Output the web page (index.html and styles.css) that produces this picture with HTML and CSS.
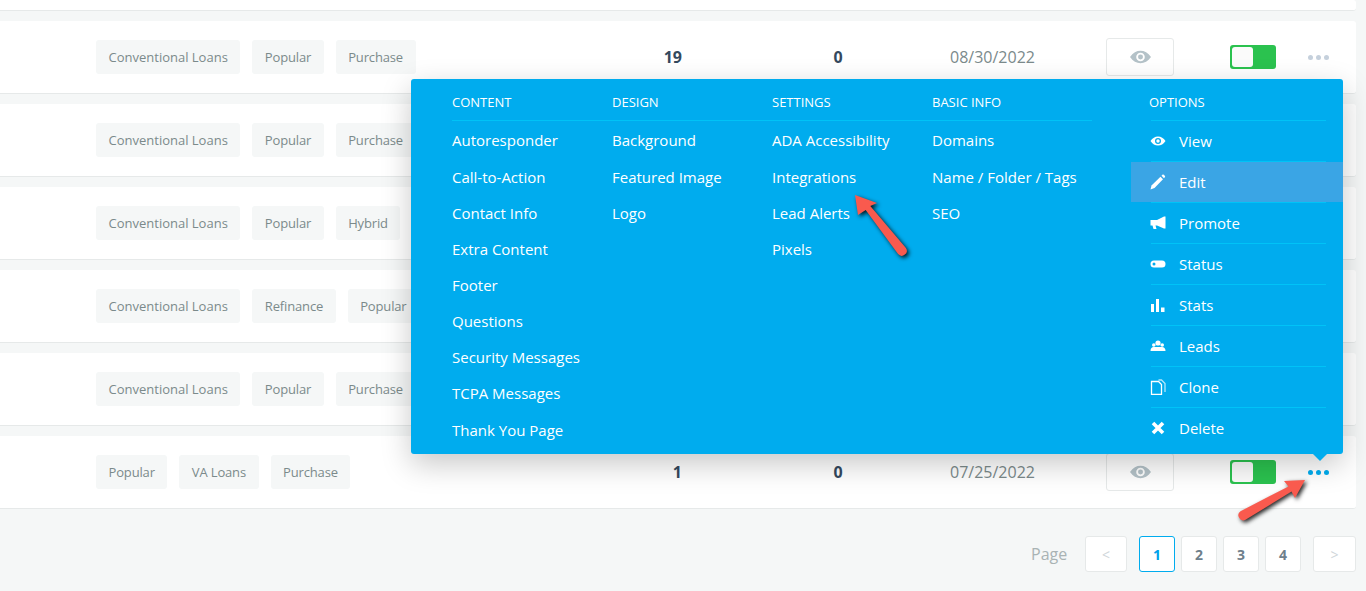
FILE: index.html
```html
<!DOCTYPE html>
<html lang="en">
<head>
<meta charset="utf-8">
<title>Funnels</title>
<link rel="stylesheet" href="styles.css">
</head>
<body>
<main class="page">
  <div class="row row-cut"></div>

  <div class="row">
    <div class="tags"><span class="tag">Conventional Loans</span><span class="tag tight">Popular</span><span class="tag tight">Purchase</span></div>
    <div class="num num-r">19</div><div class="num">0</div><div class="date">08/30/2022</div>
    <button class="eye-btn"><svg class="eye" viewBox="0 0 22 14"><path fill-rule="evenodd" d="M0 7C3 2.500 7 .5 11 .5S19 2.500 22 7c-3 4.500-7 6.500-11 6.500S3 11.500 0 7Zm11-4.500a4.500 4.500 0 1 0 0 9 4.500 4.500 0 0 0 0-9Z"/><circle cx="11" cy="7" r="2.600"/></svg></button>
    <div class="toggle"><span class="knob"></span></div>
    <div class="dots"><i></i><i></i><i></i></div>
  </div>

  <div class="row">
    <div class="tags"><span class="tag">Conventional Loans</span><span class="tag tight">Popular</span><span class="tag tight">Purchase</span></div>
  </div>
  <div class="row">
    <div class="tags"><span class="tag">Conventional Loans</span><span class="tag tight">Popular</span><span class="tag tight">Hybrid</span></div>
  </div>
  <div class="row">
    <div class="tags"><span class="tag">Conventional Loans</span><span class="tag tight">Refinance</span><span class="tag tight">Popular</span></div>
  </div>
  <div class="row">
    <div class="tags"><span class="tag">Conventional Loans</span><span class="tag tight">Popular</span><span class="tag tight">Purchase</span></div>
  </div>

  <div class="row">
    <div class="tags"><span class="tag tight">Popular</span><span class="tag tight">VA Loans</span><span class="tag tight">Purchase</span></div>
    <div class="num num-r">1</div><div class="num">0</div><div class="date">07/25/2022</div>
    <button class="eye-btn"><svg class="eye" viewBox="0 0 22 14"><path fill-rule="evenodd" d="M0 7C3 2.500 7 .5 11 .5S19 2.500 22 7c-3 4.500-7 6.500-11 6.500S3 11.500 0 7Zm11-4.500a4.500 4.500 0 1 0 0 9 4.500 4.500 0 0 0 0-9Z"/><circle cx="11" cy="7" r="2.600"/></svg></button>
    <div class="toggle"><span class="knob"></span></div>
    <div class="dots active"><i></i><i></i><i></i></div>
  </div>

  <nav class="pager">
    <span class="pager-label">Page</span>
    <a class="pg pg-edge">&lt;</a>
    <a class="pg current">1</a>
    <a class="pg">2</a>
    <a class="pg">3</a>
    <a class="pg">4</a>
    <a class="pg pg-edge pg-next">&gt;</a>
  </nav>
</main>

<section class="menu">
  <div class="cols">
    <div class="col">
      <h4>Content</h4>
      <a>Autoresponder</a><a>Call-to-Action</a><a>Contact Info</a><a>Extra Content</a><a>Footer</a><a>Questions</a><a>Security Messages</a><a>TCPA Messages</a><a>Thank You Page</a>
    </div>
    <div class="col">
      <h4>Design</h4>
      <a>Background</a><a>Featured Image</a><a>Logo</a>
    </div>
    <div class="col">
      <h4>Settings</h4>
      <a>ADA Accessibility</a><a>Integrations</a><a>Lead Alerts</a><a>Pixels</a>
    </div>
    <div class="col">
      <h4>Basic Info</h4>
      <a>Domains</a><a>Name / Folder / Tags</a><a>SEO</a>
    </div>
  </div>
  <div class="options">
    <h4>Options</h4>
    <a class="opt"><span class="opt-in"><svg class="ico" viewBox="0 0 16 16"><path fill-rule="evenodd" d="M.5 8C2.500 5 5 3.500 8 3.500S13.500 5 15.500 8c-2 3-4.500 4.500-7.500 4.500S2.500 11 .5 8ZM8 5a3 3 0 1 0 0 6 3 3 0 0 0 0-6Z"/><circle cx="8" cy="8" r="1.700"/></svg>View</span></a>
    <a class="opt hover"><span class="opt-in"><svg class="ico" viewBox="0 0 16 16"><path d="M.5 15.500 1.500 11.500 10.500 2.800l2.500 2.500L4.500 14Z"/><path d="M11.500 1.800 12.700.6q.6-.4 1.100.1L15 1.900q.3.500 0 1L14 4.300Z"/></svg>Edit</span></a>
    <a class="opt"><span class="opt-in"><svg class="ico" viewBox="0 0 16 16"><path d="M.5 5H7l7-3.500h1.500v12H14L7 10.500H5.500L6.500 14H3.500L2.500 10.500H.5Z"/></svg>Promote</span></a>
    <a class="opt"><span class="opt-in"><svg class="ico" viewBox="0 0 16 16"><path fill-rule="evenodd" d="M4 4.500h8a3.500 3.500 0 0 1 0 7H4a3.500 3.500 0 0 1 0-7Zm0 2a1.500 1.500 0 1 0 0 3 1.500 1.500 0 0 0 0-3Z"/></svg>Status</span></a>
    <a class="opt"><span class="opt-in"><svg class="ico" viewBox="0 0 16 16"><rect x="1" y="7" width="3" height="8"/><rect x="6" y="2" width="3" height="13"/><rect x="11" y="10.500" width="3.500" height="4.500"/></svg>Stats</span></a>
    <a class="opt"><span class="opt-in"><svg class="ico" viewBox="0 0 16 16"><circle cx="8" cy="5" r="2.600"/><circle cx="3.800" cy="7" r="1.800"/><circle cx="12.200" cy="7" r="1.800"/><path d="M.5 13c0-3 1.500-4 3-4h8.500c2 0 3.500 1.500 3.500 4Z"/></svg>Leads</span></a>
    <a class="opt"><span class="opt-in"><svg class="ico ico-line" viewBox="0 0 16 16"><path d="M1.500 2.500h7l3 3v10h-10Z"/><path d="M8.500 1h3l3.500 3.500V13" opacity=".7"/></svg>Clone</span></a>
    <a class="opt"><span class="opt-in"><svg class="ico ico-x" viewBox="0 0 16 16"><path d="M3 3l10 10M13 3 3 13"/></svg>Delete</span></a>
  </div>
  <span class="caret"></span>
</section>

<svg class="callouts" viewBox="0 0 1366 591">
  <g class="callout">
    <path d="M855 195 877 203 870.300 206.100 905.900 247.900A5 5 0 0 1 898.100 254.100L865.700 209.900 858 215Z"/>
    <path d="M1305 480 1295 498 1291.500 491.600 1245.500 519.800A5 5 0 0 1 1240.500 511.200L1288.500 486.400 1284 481Z"/>
  </g>
</svg>
</body>
</html>
```

FILE: styles.css
```css
* { box-sizing: border-box; }
html, body { margin: 0; height: 591px; overflow: hidden; }
body {
  background: #f5f7f7;
  font-family: "Open Sans", "Noto Sans", sans-serif;
  color: #7b8a8b;
  position: relative;
}
.page { width: 1366px; }

.row {
  width: 1356px;
  height: 73px;
  margin-bottom: 10px;
  background: #fff;
  border-bottom: 1px solid #e6e9e9;
  border-radius: 0 3px 3px 0;
  display: grid;
  grid-template-columns: 517px 120px 210px 163px 68px 102px 53px;
  align-items: center;
  padding-left: 96px;
}
.row-cut { height: 11px; }

.tags { display: flex; gap: 12px; }
.tag {
  height: 34px;
  line-height: 34px;
  padding: 0 12.500px;
  background: #f5f7f7;
  border-radius: 3px;
  font-size: 13px;
  color: #7b8a8b;
  white-space: nowrap;
}
.tag.tight { letter-spacing: -.15px; }
.num { text-align: center; font-size: 16px; font-weight: 700; color: #34495e; }
.num-r { text-align: right; padding-right: 51px; }
.date { padding-left: 7px; font-size: 16px; color: #7b8a8b; }
.eye-btn {
  width: 68px;
  height: 38px;
  padding: 0;
  background: #fff;
  border: 1px solid #e6e9e9;
  border-radius: 3px;
  display: flex;
  align-items: center;
  justify-content: center;
}
.eye { width: 21px; height: 14px; fill: #b4c2c8; }
.toggle {
  width: 46px;
  height: 24px;
  margin-left: 56px;
  background: #2bc24f;
  border-radius: 3px;
  padding: 2px;
}
.knob { display: block; width: 21px; height: 20px; background: #fbfbfb; border-radius: 3px; }
.dots { display: flex; gap: 3px; margin-left: 32px; }
.dots i { width: 5px; height: 5px; border-radius: 50%; background: #c5d0dc; }
.dots.active i { background: #00acee; }

.pager { display: flex; align-items: center; width: 1356px; height: 36px; margin-top: 27px; padding-left: 1031px; }
.pager-label { width: 54px; font-size: 16px; color: #a9b3b4; }
.pg {
  width: 36px;
  height: 36px;
  margin-right: 6px;
  display: flex;
  align-items: center;
  justify-content: center;
  background: #fff;
  border: 1px solid #e6e9e9;
  border-radius: 3px;
  font-size: 14px;
  font-weight: 700;
  color: #6f7f8c;
}
.pg-edge { width: 42px; margin-right: 12px; font-weight: 400; color: #cfd6da; }
.pg-next { width: 43px; margin: 0 0 0 6px; }
.pg.current { border-color: #00acee; color: #00a0ea; }

.menu {
  position: absolute;
  left: 411px;
  top: 79px;
  width: 932px;
  height: 375px;
  background: #00acee;
  border-radius: 3px;
  box-shadow: 0 10px 30px rgba(0, 0, 0, .22);
  display: flex;
  color: #fff;
}
.menu a { color: #fff; }
.menu h4 {
  margin: 0;
  height: 41px;
  padding-top: 14px;
  line-height: 18px;
  font-size: 13px;
  font-weight: 400;
  text-transform: uppercase;
}
.cols { display: flex; width: 720px; padding-left: 41px; }
.col { width: 160px; }
.menu .col h4 { height: 42px; border-bottom: 1px solid #00c3f7; margin-bottom: 1.400px; }
.col a { display: block; height: 36.170px; line-height: 36px; font-size: 15px; white-space: nowrap; }

.options { width: 212px; }
.options h4 { padding-left: 18px; }
.opt { display: block; height: 41px; padding: 0 17px 0 20px; }
.opt-in {
  height: 41px;
  display: flex;
  align-items: center;
  gap: 13px;
  border-top: 1px solid #00c3f7;
  font-size: 15px;
}
.opt.hover { background: linear-gradient(transparent 1px, #3aa5e5 1px); }
.ico { width: 16px; height: 16px; margin-left: -1px; fill: #fff; flex: none; }
.ico-line { fill: none; stroke: #fff; stroke-width: 1.300; }
.ico-x { fill: none; stroke: #fff; stroke-width: 3.600; }
.caret {
  position: absolute;
  left: 902px;
  top: 375px;
  border-left: 7px solid transparent;
  border-right: 7px solid transparent;
  border-top: 7px solid #00acee;
}

.callouts { position: absolute; left: 0; top: 0; width: 1366px; height: 591px; pointer-events: none; }
.callout { fill: #f95a4e; filter: drop-shadow(2px 2px 2px rgba(0, 0, 0, .85)); }
```
